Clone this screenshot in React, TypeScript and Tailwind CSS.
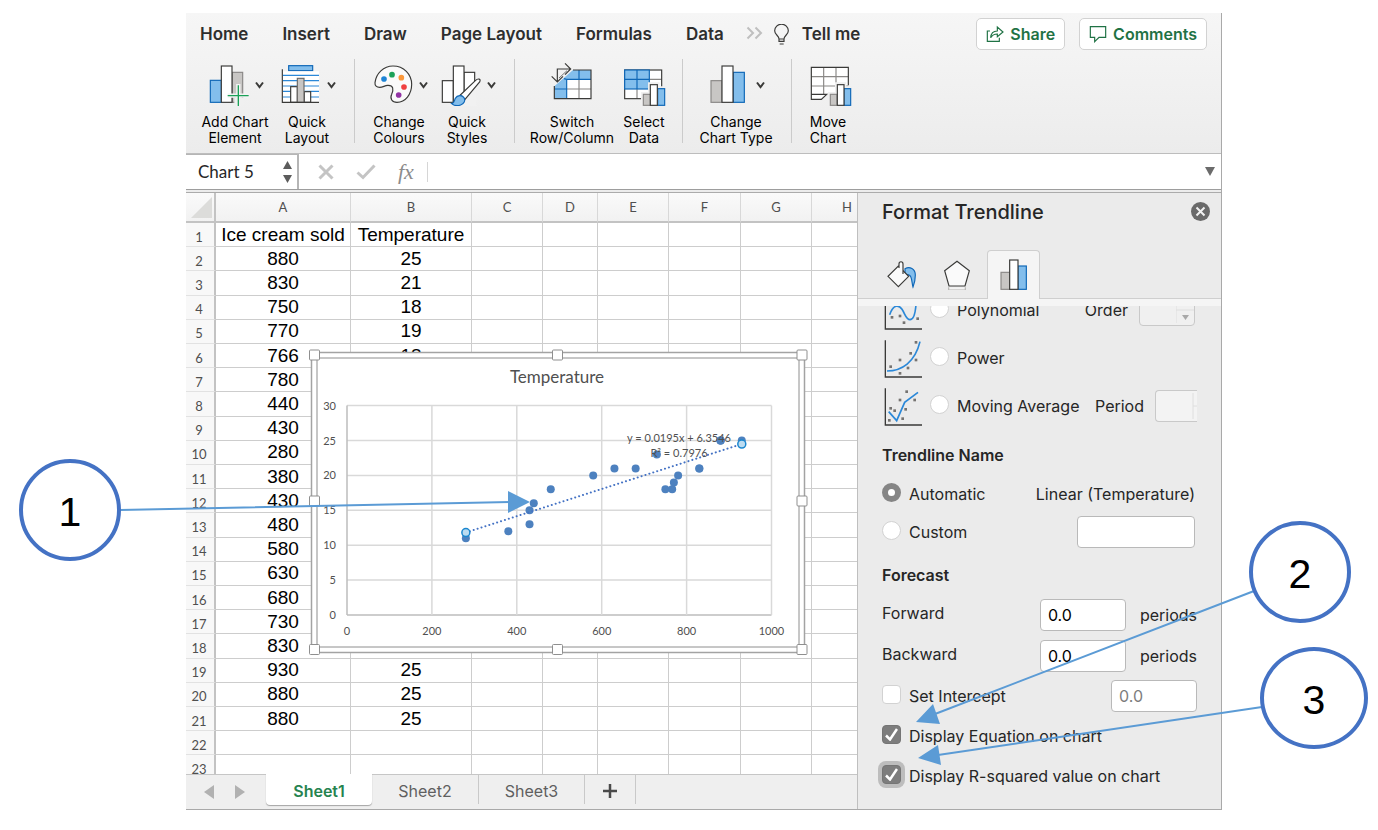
import { ReactNode } from "react";
import clsx from "clsx";

const ROWS: [number, string, string][] = [
  [1, "Ice cream sold", "Temperature"],
  [2, "880", "25"],
  [3, "830", "21"],
  [4, "750", "18"],
  [5, "770", "19"],
  [6, "766", "18"],
  [7, "780", "20"],
  [8, "440", "16"],
  [9, "430", "15"],
  [10, "280", "11"],
  [11, "380", "12"],
  [12, "430", "13"],
  [13, "480", "18"],
  [14, "580", "20"],
  [15, "630", "21"],
  [16, "680", "21"],
  [17, "730", "23"],
  [18, "830", "21"],
  [19, "930", "25"],
  [20, "880", "25"],
  [21, "880", "25"],
  [22, "", ""],
  [23, "", ""],
];

const BLUE = "#83beec";
const BLUE_LINE = "#0f67b7";
const GREY = "#c8c6c4";
const GREY_LINE = "#8a8886";
const INK = "#3a3a38";

export default function App() {
  return (
    <div className="relative min-h-[830px] bg-white pt-[13px] pr-[156px] pl-[186px] font-['Inter',sans-serif]">
      <div className="border-r border-b border-[#a9a9a9] bg-[#ececec]">
        <Ribbon />
        <FormulaBar />
        <div className="flex h-[617px] border-t border-[#ababab]">
          <div className="flex min-w-0 flex-1 flex-col">
            <Sheet />
            <SheetTabs />
          </div>
          <TrendlinePanel />
        </div>
      </div>
      <Callouts />
    </div>
  );
}

/* ---------- ribbon ---------- */

function Ribbon() {
  return (
    <header className="h-[141px] border-b border-[#bdbdbd] bg-linear-to-b from-[#f6f6f6] to-[#ececec]">
      <div className="flex h-[42px] items-center pr-[14px] pl-[14px]">
        <nav className="flex items-center gap-[34px] text-[17px] leading-6 font-semibold whitespace-nowrap text-[#2e2e2e]">
          <a href="#home">Home</a>
          <a href="#insert">Insert</a>
          <a href="#draw">Draw</a>
          <a href="#page-layout">Page Layout</a>
          <a href="#formulas">Formulas</a>
          <a href="#data">Data</a>
        </nav>
        <button aria-label="More tabs" className="ml-[22px] pb-[2px]">
          <svg width="17" height="14" viewBox="0 0 17 14" fill="none" stroke="#bfbfbf" strokeWidth="2">
            <path d="M1.500 1.500 7 7l-5.500 5.500M9.500 1.500 15 7l-5.500 5.500" />
          </svg>
        </button>
        <button className="ml-[11px] flex items-center gap-[13px] text-[17px] leading-6 font-semibold whitespace-nowrap text-[#2e2e2e]">
          <svg width="15" height="21" viewBox="0 0 45 63" fill="none" stroke={INK} strokeWidth="3.5">
            <path d="M15 45c0-10-13-13-13-25a20 19 0 0 1 41 0c0 12-13 15-13 25v7H15zM15 45h15M17 60h12" />
          </svg>
          Tell me
        </button>
        <div className="ml-auto flex gap-[14px] text-base font-semibold text-[#1f7244]">
          <button className="flex h-8 items-center gap-[6px] rounded-[5px] border border-[#d2d2d2] bg-white px-[9px]">
            <svg width="18" height="18" viewBox="0 0 54 54" fill="none" stroke="currentColor" strokeWidth="3.5">
              <path d="M12 18H4v31h36V38" />
              <path d="M14 38c1-14 8-20 20-20V6l17 15-17 14V27c-9 0-15 3-20 11z" />
            </svg>
            Share
          </button>
          <button className="flex h-8 items-center gap-[6px] rounded-[5px] border border-[#d2d2d2] bg-white px-[9px]">
            <svg width="18" height="18" viewBox="0 0 54 54" fill="none" stroke="currentColor" strokeWidth="3.5">
              <path d="M4 5h46v32H30L17 50V37H4z" />
            </svg>
            Comments
          </button>
        </div>
      </div>

      <div className="flex pt-1">
        <RibbonGroup className="pr-[14px] pl-[10px]">
          <RibbonButton className="w-[78px]" label={["Add Chart", "Element"]} icon={<AddElementIcon />} menu />
          <RibbonButton className="w-[66px]" label={["Quick", "Layout"]} icon={<QuickLayoutIcon />} menu />
        </RibbonGroup>
        <RibbonGroup className="pr-[14px] pl-[9px]">
          <RibbonButton className="w-[70px]" label={["Change", "Colours"]} icon={<PaletteIcon />} menu />
          <RibbonButton className="w-[66px]" label={["Quick", "Styles"]} icon={<QuickStylesIcon />} menu />
        </RibbonGroup>
        <RibbonGroup className="pr-[13px] pl-[10px]">
          <RibbonButton className="w-[94px]" label={["Switch", "Row/Column"]} icon={<SwitchIcon />} />
          <RibbonButton className="w-[50px]" label={["Select", "Data"]} icon={<SelectDataIcon />} />
        </RibbonGroup>
        <RibbonGroup className="pr-[10px] pl-[8px]">
          <RibbonButton className="w-[90px]" label={["Change", "Chart Type"]} icon={<ChartTypeIcon />} menu />
        </RibbonGroup>
        <RibbonButton className="ml-1 w-[64px]" label={["Move", "Chart"]} icon={<MoveChartIcon />} />
      </div>
    </header>
  );
}

function RibbonGroup({ className, children }: { className: string; children: ReactNode }) {
  return <div className={clsx("flex h-[84px] border-r border-[#cbcbcb]", className)}>{children}</div>;
}

interface RibbonButtonProps {
  className: string;
  label: [string, string];
  icon: ReactNode;
  menu?: boolean;
}
function RibbonButton({ className, label, icon, menu }: RibbonButtonProps) {
  return (
    <button className={clsx("flex h-[84px] flex-col items-center pt-[3px]", className)}>
      <span className={clsx("flex h-[52px] shrink-0 items-start gap-[6px]", menu && "pl-[2px]")}>
        {icon}
        {menu && (
          <svg className="mt-[19px]" width="9" height="8" viewBox="0 0 9 8" fill="none" stroke={INK} strokeWidth="2">
            <path d="M1 1.500 4.500 6 8 1.500" />
          </svg>
        )}
      </span>
      <span className="text-sm leading-4 whitespace-nowrap text-black">
        {label[0]}
        <br />
        {label[1]}
      </span>
    </button>
  );
}

function AddElementIcon() {
  return (
    <svg width="40" height="44" viewBox="0 0 120 132" strokeWidth="3.5">
      <rect x="70" y="31" width="31" height="90" fill={GREY} stroke={GREY_LINE} />
      <rect x="4" y="55" width="33" height="66" fill={BLUE} stroke={BLUE_LINE} />
      <rect x="37" y="12" width="32" height="109" fill="#fff" stroke={INK} />
      <path d="M88 66v66M56 101h64" stroke="#f3f3f3" strokeWidth="13" />
      <path d="M76 108h30v20H76z" fill="#f0f0f0" />
      <path d="M88 70v62M56 101h63" stroke="#1ba158" strokeWidth="4" />
    </svg>
  );
}

function QuickLayoutIcon() {
  return (
    <svg width="40" height="44" viewBox="0 0 120 132" strokeWidth="3.5">
      <rect x="23" y="11" width="72" height="15" fill={BLUE} stroke={BLUE_LINE} />
      <rect x="5" y="28" width="109" height="92" fill="#fff" />
      <path d="M6 40h108M6 56h108M6 72h108M6 88h108M6 105h108" stroke="#2b88d8" />
      <rect x="29" y="74" width="20" height="47" fill="#fff" stroke={INK} />
      <rect x="70" y="89" width="19" height="32" fill="#fff" stroke={INK} />
      <rect x="49" y="49" width="20" height="72" fill={GREY} stroke="#6b6967" />
      <path d="M4 22v99h110" fill="none" stroke={INK} />
    </svg>
  );
}

function PaletteIcon() {
  return (
    <svg width="40" height="44" viewBox="0 0 120 132">
      <path
        d="M6 62C9 34 32 12 60 12c32 0 56 24 56 55 0 30-19 54-44 54-15 0-22-11-16-24 6-14 6-28-12-27-10 1-14 6-24 6-9 0-15-5-14-14z"
        fill="#fafafa"
        stroke={INK}
        strokeWidth="3.5"
      />
      <circle cx="33" cy="51" r="8.5" fill="#1e84d6" />
      <circle cx="57" cy="38" r="8.5" fill="#1ba158" />
      <circle cx="85" cy="47" r="8.5" fill="#fb983b" />
      <circle cx="93" cy="75" r="8.5" fill="#f04040" />
      <circle cx="77" cy="99" r="8.5" fill="#9234a4" />
    </svg>
  );
}

function QuickStylesIcon() {
  return (
    <svg width="40" height="44" viewBox="0 0 120 132" strokeWidth="3.5">
      <rect x="4" y="56" width="33" height="65" fill="#fff" stroke={INK} />
      <rect x="69" y="31" width="32" height="90" fill="#fff" stroke={INK} />
      <rect x="37" y="12" width="32" height="109" fill="#fff" stroke={INK} />
      <path d="M118 50 62 112l-32 18h72V84z" fill="#f1f1f1" stroke="#f1f1f1" strokeWidth="8" />
      <path d="M58 99 103 56c8-8 18-6 13 4L72 112z" fill="#fff" stroke={INK} />
      <path d="M32 125c9-1 7-8 11-16 6-10 20-11 26-2 5 9 0 19-10 22-9 3-20 2-27-4z" fill={BLUE} stroke={BLUE_LINE} />
    </svg>
  );
}

function SwitchIcon() {
  return (
    <svg width="42" height="44" viewBox="0 0 126 132" strokeWidth="3.5" fill="none">
      <path d="M47 52h73v58H47z" fill="#fff" />
      <path d="M66 24h54v28H47v58H10V73z" fill={BLUE} />
      <path d="M47 81h73M84 52v58" stroke={GREY_LINE} />
      <path d="M84 24v28M120 52H47v58M47 52l-8-2M10 81h37" stroke={BLUE_LINE} />
      <path d="M10 72v38h110V24H66" stroke={INK} />
      <path d="M19 60V21h40M42 4l17 17-17 17M2 43l17 17 17-17" stroke={INK} />
      <path d="M24 48 48 26" stroke={INK} strokeWidth="2" />
    </svg>
  );
}

function SelectDataIcon() {
  return (
    <svg width="43" height="44" viewBox="0 0 129 132" strokeWidth="3.5" fill="none">
      <rect x="5" y="24" width="111" height="86" fill="#fff" />
      <path d="M42 81v29M79 81v29M79 52h37M79 81h37" stroke={GREY_LINE} />
      <rect x="5" y="24" width="111" height="86" stroke={INK} />
      <rect x="5" y="24" width="74" height="57" fill={BLUE} stroke={BLUE_LINE} />
      <path d="M42 24v57M5 52h74" stroke={BLUE_LINE} />
      <path d="M54 90h21V61h35v12h22v59H54z" fill="#f0f0f0" />
      <rect x="61" y="97" width="21" height="33" fill={GREY} stroke={GREY_LINE} />
      <rect x="104" y="80" width="21" height="50" fill={BLUE} stroke={BLUE_LINE} />
      <rect x="82" y="68" width="21" height="62" fill="#fff" stroke={INK} />
    </svg>
  );
}

function ChartTypeIcon() {
  return (
    <svg width="40" height="44" viewBox="0 0 120 132" strokeWidth="3.5">
      <rect x="3" y="56" width="33" height="65" fill={GREY} stroke={GREY_LINE} />
      <rect x="70" y="31" width="33" height="90" fill={BLUE} stroke={BLUE_LINE} />
      <rect x="36" y="12" width="33" height="109" fill="#fff" stroke={INK} />
    </svg>
  );
}

function MoveChartIcon() {
  return (
    <svg width="48" height="44" viewBox="-18 0 144 132" strokeWidth="3.5" fill="none">
      <path d="M4 16h111v80H52l-16 16H4z" fill="#fff" />
      <path d="M4 44h111M4 72h111M41 16v80M78 16v80" stroke={GREY_LINE} />
      <path d="M115 70V16H4v96h30l16-15H4" stroke={INK} />
      <path d="M54 90h21V61h34v12h20v59H54z" fill="#f0f0f0" />
      <rect x="61" y="97" width="20" height="33" fill={GREY} stroke={GREY_LINE} />
      <rect x="102" y="80" width="20" height="50" fill={BLUE} stroke={BLUE_LINE} />
      <rect x="82" y="68" width="20" height="62" fill="#fff" stroke={INK} />
    </svg>
  );
}

/* ---------- formula bar ---------- */

function FormulaBar() {
  return (
    <div className="mb-[2px] flex h-9 items-center border-b border-[#9d9d9d] bg-white">
      <div className="flex h-full w-[113px] items-center justify-between border-t border-r-2 border-[#b5b5b5] pr-1 pl-3">
        <input
          aria-label="Name box"
          defaultValue="Chart 5"
          className="w-[80px] bg-transparent font-['Lato','Noto_Sans',sans-serif] text-[17px] text-[#262626] outline-none"
        />
        <svg width="11" height="24" viewBox="0 0 11 24" fill="#5c5c5c">
          <path d="M5.500 1 10 9H1zM5.500 23 1 15h9z" />
        </svg>
      </div>
      <button aria-label="Cancel" className="ml-[19px]">
        <svg width="16" height="16" viewBox="0 0 16 16" stroke="#c4c4c4" strokeWidth="3">
          <path d="m1.500 1.500 13 13M14.500 1.500l-13 13" />
        </svg>
      </button>
      <button aria-label="Enter" className="ml-[22px]">
        <svg width="20" height="16" viewBox="0 0 20 16" fill="none" stroke="#c4c4c4" strokeWidth="3">
          <path d="m1.500 8.500 5.500 5L18.500 1.500" />
        </svg>
      </button>
      <button
        aria-label="Insert function"
        className="ml-[22px] w-5 text-left font-['Liberation_Serif',serif] text-[22px] leading-6 italic text-[#8c8c8c]"
      >
        fx
      </button>
      <input aria-label="Formula" className="ml-[9px] h-5 min-w-0 flex-1 border-l border-[#d6d6d6] outline-none" />
      <button aria-label="Expand formula bar" className="pr-[6px]">
        <svg width="10" height="9" viewBox="0 0 10 9" fill="#6b6b6b">
          <path d="M0 0h10L5 9z" />
        </svg>
      </button>
    </div>
  );
}

/* ---------- sheet ---------- */

const HEAD = "border-r border-b-2 border-r-[#d8d8d8] border-b-[#c3c3c3] font-normal";
const CELL = "border-r border-b border-[#cdcdcd] p-0";

function Sheet() {
  return (
    <div className="relative min-h-0 flex-1 overflow-hidden bg-white">
      <table className="h-[587px] w-[697px] table-fixed border-separate border-spacing-0 text-center text-[19px] leading-5 text-black">
        <colgroup>
          <col className="w-[30px]" />
          <col className="w-[135px]" />
          <col className="w-[121px]" />
          <col className="w-[71px]" />
          <col className="w-[55px]" />
          <col className="w-[71px]" />
          <col className="w-[72px]" />
          <col className="w-[71px]" />
          <col className="w-[71px]" />
        </colgroup>
        <thead className="bg-linear-to-b from-[#fafafa] to-[#f1f1f1] font-['Lato','Noto_Sans',sans-serif] text-[13px] text-[#4f4f4f]">
          <tr className="h-[30px]">
            <th className="border-r-2 border-b-2 border-[#c3c3c3] p-0">
              <svg className="ml-[5px]" width="21" height="21" viewBox="0 0 21 21">
                <path d="M21 0v21H0z" fill="#dcdcda" />
              </svg>
            </th>
            {["A", "B", "C", "D", "E", "F", "G", "H"].map((column) => (
              <th key={column} scope="col" className={HEAD}>
                {column}
              </th>
            ))}
          </tr>
        </thead>
        <tbody className="font-['Liberation_Sans',sans-serif]">
          {ROWS.map(([number, sold, temperature]) => (
            <tr key={number}>
              <th
                scope="row"
                className="border-r-2 border-b border-r-[#c3c3c3] border-b-[#e2e2e2] bg-[#f8f8f8] p-0 pt-1 pr-[2px] font-['Lato','Noto_Sans',sans-serif] text-[13px] leading-4 font-normal text-[#4f4f4f]"
              >
                {number}
              </th>
              <td className={clsx(CELL, "whitespace-nowrap")}>{sold}</td>
              <td className={CELL}>{temperature}</td>
              <td className={CELL} />
              <td className={CELL} />
              <td className={CELL} />
              <td className={CELL} />
              <td className={CELL} />
              <td className={CELL} />
            </tr>
          ))}
        </tbody>
      </table>
      <Chart />
    </div>
  );
}

const POINTS = ROWS.slice(1, 21).map((row) => [Number(row[1]), Number(row[2])]);
const px = (value: number) => 36 + value * 0.4245;
const py = (value: number) => 263 - value * 6.98;
const trend = (value: number) => 0.0195 * value + 6.3546;

function Chart() {
  return (
    <svg
      className="absolute top-[154px] left-[120px] overflow-visible font-['Lato','Noto_Sans',sans-serif]"
      width="504"
      height="312"
      viewBox="-5 -5 504 312"
      fill="#505050"
      role="img"
      aria-label="Temperature scatter chart"
    >
      <rect x="0.5" y="0.5" width="493" height="300" fill="#fff" stroke="#a3a3a3" strokeWidth="1.5" />
      <rect x="6" y="6" width="482" height="289" fill="#fff" stroke="#b4b4b4" strokeWidth="1.5" />
      <text x="246" y="31" textAnchor="middle" fontSize="17">
        Temperature
      </text>
      {[0, 5, 10, 15, 20, 25, 30].map((tick) => (
        <g key={tick}>
          <path d={`M36 ${py(tick)}h424.5`} stroke={tick === 0 ? "#bdbdbd" : "#d9d9d9"} strokeWidth="1.5" />
          <text x="25" y={py(tick) + 4} textAnchor="end" fontSize="11">
            {tick}
          </text>
        </g>
      ))}
      {[0, 200, 400, 600, 800, 1000].map((tick) => (
        <g key={tick}>
          <path d={`M${px(tick)} 53.6v209.4`} stroke={tick === 0 ? "#bdbdbd" : "#d9d9d9"} strokeWidth="1.5" />
          <text x={px(tick)} y="283" textAnchor="middle" fontSize="11">
            {tick}
          </text>
        </g>
      ))}
      {POINTS.map(([x, y], i) => (
        <circle key={i} cx={px(x)} cy={py(y)} r="4" fill="#4d81bf" />
      ))}
      <line
        x1={px(280)}
        y1={py(trend(280))}
        x2={px(930)}
        y2={py(trend(930))}
        stroke="#4472c4"
        strokeWidth="2"
        strokeDasharray="0.1 4"
        strokeLinecap="round"
      />
      {[280, 930].map((x) => (
        <circle key={x} cx={px(x)} cy={py(trend(x))} r="4" fill="#bcdcf1" stroke="#1b87cf" strokeWidth="1.5" />
      ))}
      <g fontSize="11" textAnchor="middle">
        <text x="368" y="90">
          y = 0.0195x + 6.3546
        </text>
        <text x="368" y="105">
          R² = 0.7976
        </text>
      </g>
      {[3.5, 246.5, 491].map((x) =>
        [3, 149, 297.5].map(
          (y) =>
            !(x === 246.5 && y === 149) && (
              <rect key={`${x}-${y}`} x={x - 5} y={y - 5} width="10" height="10" rx="1" fill="#fff" stroke="#8f8f8f" />
            )
        )
      )}
    </svg>
  );
}

function SheetTabs() {
  return (
    <div className="flex h-[35px] border-t border-[#c6c6c6] bg-[#efefef] text-base text-[#5f5f5f]">
      <div className="flex w-[80px] items-center gap-[21px] pl-[18px]">
        <button aria-label="Previous sheet">
          <svg width="10" height="14" viewBox="0 0 10 14" fill="#b1b1b1">
            <path d="M10 0v14L0 7z" />
          </svg>
        </button>
        <button aria-label="Next sheet">
          <svg width="10" height="14" viewBox="0 0 10 14" fill="#b1b1b1">
            <path d="M0 0v14l10-7z" />
          </svg>
        </button>
      </div>
      <button className="-mt-px h-[31px] w-[106px] rounded-b-[4px] bg-white pt-[2px] font-semibold text-[#26834f] shadow-[0_1px_1px_#a5a5a5]">
        Sheet1
      </button>
      <button className="h-[29px] w-[107px] border-r border-[#c9c9c9] pt-[2px]">Sheet2</button>
      <button className="h-[29px] w-[106px] border-r border-[#c9c9c9] pt-[2px]">Sheet3</button>
      <button aria-label="Add sheet" className="flex h-[29px] w-[51px] items-center justify-center border-r border-[#c9c9c9] pt-[2px]">
        <svg width="14" height="14" viewBox="0 0 14 14" stroke="#4a4a4a" strokeWidth="2.5">
          <path d="M7 0v14M0 7h14" />
        </svg>
      </button>
    </div>
  );
}

/* ---------- format pane ---------- */

const FIELD = "h-8 rounded-[4px] border border-[#b9b9b9] bg-white px-[7px] text-base text-black outline-none";
const RADIO =
  "mb-1 size-[19px] shrink-0 appearance-none rounded-full border border-[#d2d2d2] bg-white checked:border-[6px] checked:border-[#858585]";

function TrendlinePanel() {
  return (
    <aside className="flex w-[364px] shrink-0 flex-col overflow-hidden border-l border-[#bfbfbf] bg-[#ebebeb] text-base text-[#262626]">
      <div className="flex h-[37px] shrink-0 items-center justify-between pr-[11px] pl-6">
        <h2 className="text-xl font-medium">Format Trendline</h2>
        <button aria-label="Close">
          <svg width="19" height="19" viewBox="0 0 19 19" stroke="#f2f2f2" strokeWidth="2">
            <circle cx="9.5" cy="9.5" r="9.5" fill="#6a6a6a" stroke="none" />
            <path d="m5.500 5.500 8 8m0-8-8 8" />
          </svg>
        </button>
      </div>

      <div className="flex h-[69px] shrink-0 items-end border-b border-[#cfcfcf] pl-[23px]" role="tablist">
        <button role="tab" aria-selected="false" aria-label="Fill &amp; Line" className="flex h-[46px] w-[50px] items-center pl-[6px]">
          <svg width="30" height="30" viewBox="0 0 90 90" fill="none" strokeWidth="3.5">
            <path d="M54 26c14-8 31 0 31 19 0 14-3 26-7 36-4-13-3-29-9-34-5-4-9-4-15-1z" fill={BLUE} stroke={BLUE_LINE} />
            <path d="M34 80 3 49l31-31 31 31z" fill="#fafafa" stroke={INK} />
            <path d="M36 24V12c0-9 12-9 12 0v30" fill="#fafafa" stroke={INK} />
          </svg>
        </button>
        <button role="tab" aria-selected="false" aria-label="Effects" className="flex h-[46px] w-[56px] items-center justify-center pr-1">
          <svg width="28" height="30" viewBox="0 0 84 90" fill="none" strokeWidth="3.5">
            <path d="M17 82v8h50v-8" fill="#f3f3f3" stroke="#b5b3b1" />
            <path d="M42 4 79 32 66 78H18L5 32z" fill="#fafafa" stroke={INK} />
          </svg>
        </button>
        <button
          role="tab"
          aria-selected="true"
          aria-label="Trendline Options"
          className="-mb-px flex h-[49px] w-[53px] items-center justify-center rounded-t-[4px] border border-b-0 border-[#cfcfcf] bg-[#f5f5f5]"
        >
          <svg width="28" height="32" viewBox="0 0 84 96" strokeWidth="3.5">
            <rect x="3" y="40" width="26" height="51" fill={GREY} stroke={GREY_LINE} />
            <rect x="54" y="21" width="25" height="70" fill={BLUE} stroke={BLUE_LINE} />
            <rect x="29" y="3" width="25" height="88" fill="#fff" stroke={INK} />
          </svg>
        </button>
      </div>
      <div className="h-[7px] shrink-0 bg-[#f5f5f5]" />

      <div className="min-h-0 flex-1 overflow-hidden pr-6 pl-6">
        {/* the list is scrolled, so the first row is cut by the tab strip */}
        <div className="-mt-[20px]">
          <TypeRow id="polynomial" label="Polynomial">
            <label htmlFor="order" className="mr-[11px]">
              Order
            </label>
            <span className="relative mr-[2px] flex">
              <input id="order" disabled className="h-8 w-[56px] rounded-[4px] border border-[#c9c9c9] bg-[#f0f0f0]" />
              <svg className="absolute top-0 right-px" width="18" height="32" viewBox="0 0 18 32" fill="#a9a9a9">
                <path d="M0 3v26M0 16h18" stroke="#dedede" />
                <path d="M6 9h7L9.500 5zM6 21h7l-3.500 5z" />
              </svg>
            </span>
          </TypeRow>
          <TypeRow id="power" label="Power" />
          <TypeRow id="moving-average" label="Moving Average">
            <label htmlFor="period" className="mr-[11px]">
              Period
            </label>
            <span className="relative flex">
              <input
                id="period"
                disabled
                className="h-8 w-[42px] rounded-l-[4px] border border-r-0 border-[#c9c9c9] bg-[#f3f3f3]"
              />
              <svg className="absolute top-0 right-0" width="5" height="32" viewBox="0 0 5 32">
                <path d="M1 3v26M1 16h4" stroke="#dedede" />
              </svg>
            </span>
          </TypeRow>

          <h3 className="flex h-[50px] items-center font-semibold">Trendline Name</h3>
          <div className="flex h-[28px] items-center">
            <input type="radio" id="automatic" name="trendline-name" defaultChecked className={RADIO} />
            <label htmlFor="automatic" className="ml-2">
              Automatic
            </label>
            <span className="mr-[2px] ml-auto">Linear (Temperature)</span>
          </div>
          <div className="flex h-[48px] items-center">
            <input type="radio" id="custom" name="trendline-name" className={RADIO} />
            <label htmlFor="custom" className="ml-2">
              Custom
            </label>
            <input aria-label="Custom name" className={clsx(FIELD, "mr-[2px] ml-auto w-[118px]")} />
          </div>

          <h3 className="flex h-[38px] items-center font-semibold">Forecast</h3>
          <PeriodRow id="forward" label="Forward" />
          <PeriodRow id="backward" label="Backward" />

          <CheckRow id="intercept" label="Set Intercept">
            <input
              aria-label="Intercept value"
              placeholder="0.0"
              className={clsx(FIELD, "ml-auto w-[86px] placeholder:text-[#7d7d7d]")}
            />
          </CheckRow>
          <CheckRow id="equation" label="Display Equation on chart" checked />
          <CheckRow id="r-squared" label="Display R-squared value on chart" checked focused />
        </div>
      </div>
    </aside>
  );
}

const CURVES: Record<string, { curve: string; dots: number[][] }> = {
  polynomial: {
    curve: "M19 71C30 40 46 40 56 55S68 86 80 86 98 64 99 20",
    dots: [[26, 79], [50, 75], [62, 95], [103, 83]],
  },
  power: {
    curve: "M11 96C55 96 95 70 110 8",
    dots: [[22, 83], [50, 63], [50, 103], [74, 87], [82, 43], [98, 63], [98, 10]],
  },
  "moving-average": {
    curve: "M16 74 40 101 64 46 104 16",
    dots: [[18, 100], [22, 64], [34, 71], [50, 39], [58, 95], [67, 67], [70, 14], [94, 39]],
  },
};

interface TypeRowProps {
  id: string;
  label: string;
  children?: ReactNode;
}
function TypeRow({ id, label, children }: TypeRowProps) {
  const { curve, dots } = CURVES[id];
  return (
    <div className="flex h-12 items-center">
      <svg width="40" height="40" viewBox="-4 -3 120 120" fill="none" strokeWidth="3.5">
        <path d="M6 4v110h110" stroke={INK} strokeWidth="4" />
        {dots.map(([x, y]) => (
          <rect key={`${x}-${y}`} x={x - 4} y={y - 4} width="8" height="8" fill="#757371" />
        ))}
        <path d={curve} stroke="#2b88d8" strokeWidth="5" />
      </svg>
      <input type="radio" id={id} name="trendline-type" className={clsx(RADIO, "ml-2")} />
      <label htmlFor={id} className="ml-2">
        {label}
      </label>
      <div className="ml-auto flex items-center">{children}</div>
    </div>
  );
}

function PeriodRow({ id, label }: { id: string; label: string }) {
  return (
    <div className="flex h-[41px] items-center">
      <label htmlFor={id} className="pb-1">
        {label}
      </label>
      <input id={id} defaultValue="0.0" className={clsx(FIELD, "ml-auto w-[86px]")} />
      <span className="ml-[14px]">periods</span>
    </div>
  );
}

interface CheckRowProps {
  id: string;
  label: string;
  checked?: boolean;
  focused?: boolean;
  children?: ReactNode;
}
function CheckRow({ id, label, checked, focused, children }: CheckRowProps) {
  return (
    <div className="flex h-10 items-center">
      <span className="relative mb-1 flex">
        <input
          type="checkbox"
          id={id}
          defaultChecked={checked}
          className={clsx(
            "size-[19px] appearance-none rounded-[4px] border border-[#d2d2d2] bg-white checked:border-[#757575] checked:bg-[#7d7d7d]",
            focused && "ring-4 ring-[#bdbdbd]"
          )}
        />
        {checked && (
          <svg
            className="pointer-events-none absolute top-[3px] left-[3px]"
            width="13"
            height="13"
            viewBox="0 0 13 13"
            fill="none"
            stroke="#fff"
            strokeWidth="2.5"
          >
            <path d="m1 7.500 4 4L12 1" />
          </svg>
        )}
      </span>
      <label htmlFor={id} className="ml-2">
        {label}
      </label>
      {children}
    </div>
  );
}

/* ---------- numbered callouts ---------- */

function Callouts() {
  return (
    <>
      <svg className="pointer-events-none absolute top-0 left-0" width="1378" height="830" fill="#5b9bd5" stroke="none">
        <path d="M120 510 510 502M1254 591 935 714M1262 707 938 755" stroke="#5b9bd5" strokeWidth="2" />
        <path d="m530 502-22-11v22zM916 722l17-18 7 20zM918 758l20-13 3 20z" />
      </svg>
      <Callout className="top-[459px] left-[19px] w-[102px]">1</Callout>
      <Callout className="top-[521px] left-[1249px] w-[102px]">2</Callout>
      <Callout className="top-[647px] left-[1260px] w-[108px]">3</Callout>
    </>
  );
}

function Callout({ className, children }: { className: string; children: ReactNode }) {
  return (
    <div
      className={clsx(
        "absolute flex h-[102px] items-center justify-center rounded-[50%] border-4 border-[#4472c4] bg-white pt-[6px] font-['Liberation_Sans',sans-serif] text-[41px] text-black",
        className
      )}
    >
      {children}
    </div>
  );
}
